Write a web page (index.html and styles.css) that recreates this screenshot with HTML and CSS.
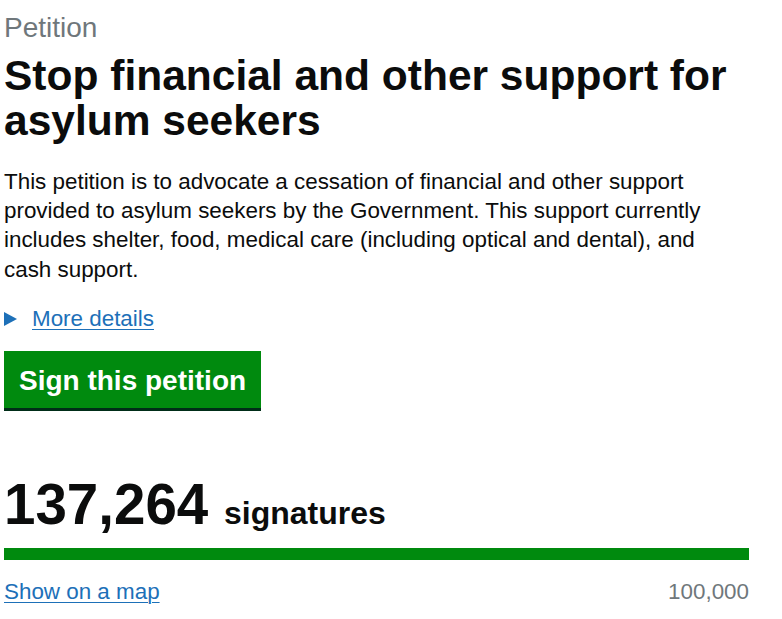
FILE: index.html
```html
<!DOCTYPE html>
<html lang="en">
<head>
  <meta charset="UTF-8">
  <meta name="viewport" content="width=device-width, initial-scale=1.0">
  <title>Stop financial and other support for asylum seekers - Petitions</title>
  <link rel="stylesheet" href="styles.css">
</head>
<body>
  <main class="petition">
    <span class="caption">Petition</span>
    <h1 class="title">Stop financial and other support for asylum seekers</h1>

    <p class="body-text">This petition is to advocate a cessation of financial and other support provided to asylum seekers by the Government. This support currently includes shelter, food, medical care (including optical and dental), and cash support.</p>

    <details class="details">
      <summary class="details-summary"><span class="details-text">More details</span></summary>
    </details>

    <a class="btn-sign" href="#">Sign this petition</a>

    <div class="signature-count">
      <p class="count"><span class="count-number">137,264</span> <span class="count-label">signatures</span></p>
      <div class="bar"><div class="bar-fill" style="width: 100%"></div></div>
      <div class="count-foot">
        <a class="link" href="#">Show on a map</a>
        <span class="threshold">100,000</span>
      </div>
    </div>
  </main>
</body>
</html>
```

FILE: styles.css
```css
html, body {
  margin: 0;
  padding: 0;
  background: #fff;
  font-family: "Liberation Sans", Arial, sans-serif;
  color: #0b0c0c;
}
.petition {
  width: 745px;
  padding: 12px 0 0 4px;
}
.caption {
  display: block;
  font-size: 28px;
  line-height: 32px;
  color: #6f777b;
}
.title {
  margin: 9px 0 0;
  font-size: 42.5px;
  line-height: 45px;
  font-weight: 700;
}
.body-text {
  max-width: 720px;
  margin: 24px 0 0;
  font-size: 22.4px;
  line-height: 29.2px;
}
.details {
  margin-top: 20px;
  font-size: 22.4px;
  line-height: 29.2px;
}
.details-summary {
  list-style: none;
  display: inline-block;
  position: relative;
  padding-left: 28px;
  color: #1d70b8;
  cursor: pointer;
}
.details-summary::-webkit-details-marker { display: none; }
.details-summary::before {
  content: "";
  position: absolute;
  left: 0;
  top: 8px;
  border-style: solid;
  border-width: 7px 0 7px 13px;
  border-color: transparent transparent transparent #1d70b8;
}
.details-text {
  text-decoration: underline;
  text-decoration-thickness: 1px;
  text-underline-offset: 3px;
}
.btn-sign {
  display: inline-block;
  margin-top: 18px;
  padding: 13px 15px 11px;
  font-size: 28px;
  line-height: 33px;
  font-weight: 700;
  color: #fff;
  background: #008a0e;
  text-decoration: none;
  box-shadow: 0 3px 0 #002d18;
}
.signature-count { margin-top: 67px; }
.count {
  margin: 0;
  font-size: 56.5px;
  line-height: 60px;
  font-weight: 700;
}
.count-label {
  font-size: 32px;
  line-height: 1;
}
.bar {
  margin-top: 13px;
  height: 11.5px;
}
.bar-fill {
  height: 100%;
  background: #008a0e;
}
.count-foot {
  display: flex;
  justify-content: space-between;
  margin-top: 17.5px;
  font-size: 22.4px;
  line-height: 29.2px;
}
.link {
  color: #1d70b8;
  text-decoration: underline;
  text-decoration-thickness: 1px;
  text-underline-offset: 3px;
}
.threshold { color: #6f777b; }
```
